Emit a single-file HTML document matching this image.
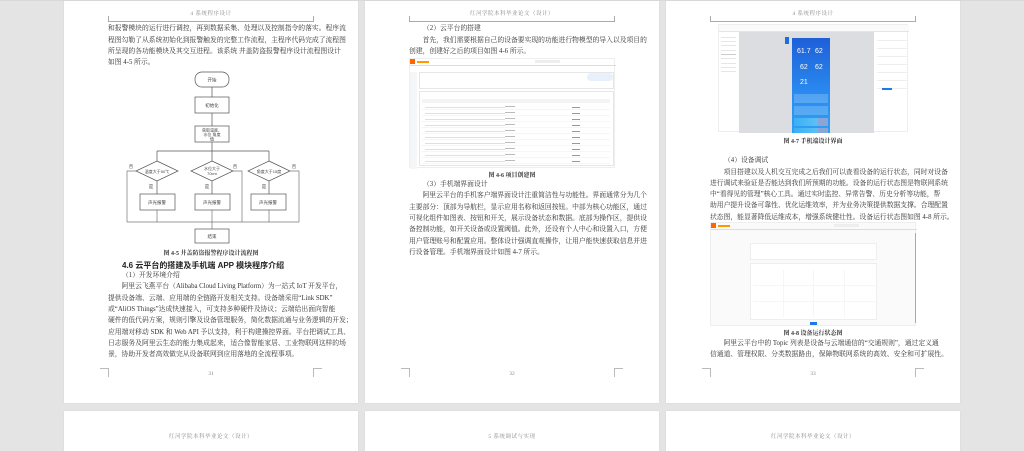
<!DOCTYPE html>
<html><head><meta charset="utf-8"><style>
*{margin:0;padding:0;box-sizing:border-box}
body{width:1024px;height:437px;overflow:hidden;background:#e4e4e4;position:relative;font-family:"Liberation Serif","Noto Serif CJK SC",serif;color:#333}
.pg{position:absolute;background:#fff;width:294px;box-shadow:0 0 1px #ccc}
.t{position:absolute;font-size:6.8px;line-height:9px;white-space:nowrap;text-align:justify;text-align-last:justify;width:206px}
.n{text-align-last:left}
.h{position:absolute;font-size:5.5px;color:#888;width:206px;text-align:center;letter-spacing:.5px}
.hl{position:absolute;height:6px;width:206px;border:0.6px solid #aaa;border-bottom:none;}
.cap{position:absolute;font-size:6px;font-weight:bold;width:206px;text-align:center;color:#333}
.pn{position:absolute;font-size:5.5px;color:#888;width:206px;text-align:center}
.cm{position:absolute;width:9px;height:9px;border-color:#bbb;border-style:solid;border-width:0}
</style></head><body>
<div class="pg" style="left:64px;top:0;height:403px"></div>
<div class="pg" style="left:365px;top:0;height:403px"></div>
<div class="pg" style="left:666px;top:0;height:403px"></div>
<div class="pg" style="left:64px;top:411px;height:40px"></div>
<div class="pg" style="left:365px;top:411px;height:40px"></div>
<div class="pg" style="left:666px;top:411px;height:40px"></div>
<div style="position:absolute;left:0;top:0;width:1024px;height:1px;background:#d8d8d8"></div>

<div class="h" style="left:108px;top:9px">4 系统程序设计</div>
<div class="h" style="left:409px;top:9px">红河学院本科毕业论文（设计）</div>
<div class="h" style="left:710px;top:9px">4 系统程序设计</div>
<div class="hl" style="left:108px;top:16px;transform:scaleY(-1)"></div>
<div class="hl" style="left:409px;top:16px;transform:scaleY(-1)"></div>
<div class="hl" style="left:710px;top:16px;transform:scaleY(-1)"></div>
<div class="h" style="left:108px;top:432px">红河学院本科毕业论文（设计）</div>
<div class="h" style="left:409px;top:432px">5 系统调试与实现</div>
<div class="h" style="left:710px;top:432px">红河学院本科毕业论文（设计）</div>

<!-- page 1 -->
<div class="t" style="left:108px;top:24px">和报警模块的运行进行调控，再到数据采集、处理以及控制指令的落实。程序流</div>
<div class="t" style="left:108px;top:35.5px">程图勾勒了从系统初始化到报警触发的完整工作流程，主程序代码完成了流程图</div>
<div class="t" style="left:108px;top:47px">所呈现的各功能模块及其交互进程。该系统 井盖防盗报警程序设计流程图设计</div>
<div class="t n" style="left:108px;top:58px">如图 4-5 所示。</div>

<svg style="position:absolute;left:0;top:0" width="1024" height="437" font-family="Liberation Sans,Noto Sans CJK SC,sans-serif" font-size="4.5" fill="none" stroke="#555" stroke-width="0.7">
<rect x="195" y="72" width="34" height="15" rx="7"/>
<rect x="195" y="97" width="34" height="16"/>
<rect x="195" y="126" width="34" height="16"/>
<path d="M212 87V97M212 113V126M212 142V151M157 151H269M157 151V161M212 151V161M269 151V161"/>
<path d="M157 161L178 171L157 181L136 171Z M212 161L233 171L212 181L191 171Z M269 161L290 171L269 181L248 171Z"/>
<path d="M157 181V194M212 181V194M269 181V194"/>
<rect x="140" y="194" width="35" height="16"/>
<rect x="195" y="194" width="35" height="16"/>
<rect x="251" y="194" width="35" height="16"/>
<path d="M157 210V222M212 210V229M269 210V222M136 171H127V222M233 171H242V222M290 171H299V222M127 222H299" stroke="#777"/>
<rect x="195" y="229" width="34" height="14"/>
<g fill="#444" stroke="none" text-anchor="middle">
<text x="212" y="81.5">开始</text><text x="212" y="107">初始化</text>
<text x="212" y="131.5" font-size="4">获取温度、</text><text x="212" y="136" font-size="4">水位 角度</text><text x="212" y="140.5" font-size="4">值</text>
<text x="157" y="173" font-size="4">温度大于50℃</text>
<text x="212" y="170" font-size="4">水位大于</text><text x="212" y="175" font-size="4">70cm</text>
<text x="269" y="173" font-size="4">角度大于15度</text>
<text x="131" y="168">否</text><text x="235" y="168">否</text><text x="294" y="168">否</text>
<text x="151" y="188">是</text><text x="207" y="188">是</text><text x="264" y="188">是</text>
<text x="157" y="204">声光报警</text><text x="212" y="204">声光报警</text><text x="268" y="204">声光报警</text>
<text x="212" y="238">结束</text>
</g>
</svg>

<div class="cap" style="left:108px;top:248px">图 4-5 井盖防盗报警程序设计流程图</div>
<div style="position:absolute;left:122px;top:259.5px;font-size:8px;font-weight:bold;font-family:'Liberation Sans','Noto Sans CJK SC',sans-serif;color:#222;white-space:nowrap">4.6 云平台的搭建及手机端 APP 模块程序介绍</div>
<div class="t n" style="left:122px;top:270.5px">（1）开发环境介绍</div>
<div class="t" style="left:108px;top:282px">　　阿里云飞燕平台（Alibaba Cloud Living Platform）为一站式 IoT 开发平台，</div>
<div class="t" style="left:108px;top:293.5px">提供设备端、云端、应用端的全链路开发相关支持。设备端采用“Link SDK”</div>
<div class="t" style="left:108px;top:305px">或“AliOS Things”达成快速接入，可支持多种硬件及协议；云端给出面向智能</div>
<div class="t" style="left:108px;top:316px">硬件的低代码方案，规则引擎及设备管理服务，简化数据流通与业务逻辑的开发；</div>
<div class="t" style="left:108px;top:327.5px">应用端对移动 SDK 和 Web API 予以支持，利于构建操控界面。平台把调试工具、</div>
<div class="t" style="left:108px;top:339px">日志服务及阿里云生态的能力集成起来，适合像智能家居、工业物联网这样的场</div>
<div class="t n" style="left:108px;top:350px">景，协助开发者高效做完从设备联网到应用落地的全流程事项。</div>
<div class="pn" style="left:108px;top:371px">31</div>

<!-- page 2 -->
<div class="t n" style="left:423px;top:24px">（2）云平台的搭建</div>
<div class="t" style="left:409px;top:35.5px">　　首先，我们需要根据自己的设备要实现的功能进行物模型的导入以及项目的</div>
<div class="t n" style="left:409px;top:47px">创建，创建好之后的项目如图 4-6 所示。</div>
<div style="position:absolute;left:409px;top:58px;width:206px;height:110px;background:#fff;border:0.5px solid #eee">
 <div style="position:absolute;left:0;top:0;width:5px;height:5px;background:#f60"></div>
 <div style="position:absolute;left:7px;top:2px;width:12px;height:2px;background:#f90"></div>
 <div style="position:absolute;left:125px;top:1px;width:25px;height:3px;background:#eee"></div>
 <div style="position:absolute;left:0;top:6px;width:206px;height:0.5px;background:#ddd"></div>
 <div style="position:absolute;left:0;top:13px;width:7px;height:97px;background:#f5f6f8"></div>
 <div style="position:absolute;left:9px;top:13px;width:195px;height:17px;border:0.5px solid #e6e6e6"></div>
 <div style="position:absolute;left:177px;top:14px;width:26px;height:8px;background:#e8f0fb;border-radius:4px"></div>
 <div style="position:absolute;left:9px;top:32px;width:195px;height:75px;border:0.5px solid #e6e6e6">
  <div style="position:absolute;left:2px;top:7px;width:188px;height:4px;background:#f3f4f6"></div>
  <div style="position:absolute;left:2px;top:12px;width:188px;height:61px;background:repeating-linear-gradient(#fff 0 5.5px,#eee 5.5px 6px)"></div>
  <div style="position:absolute;left:152px;top:13px;width:8px;height:60px;background:repeating-linear-gradient(transparent 0 2px,#6aa2e8 2px 3px,transparent 3px 6px)"></div>
  <div style="position:absolute;left:85px;top:13px;width:10px;height:60px;background:repeating-linear-gradient(transparent 0 1px,#bbb 1px 2px,transparent 2px 6px)"></div>
  <div style="position:absolute;left:5px;top:13px;width:80px;height:60px;background:repeating-linear-gradient(transparent 0 2px,#ccc 2px 2.8px,transparent 2.8px 6px);opacity:.6"></div>
 </div>
</div>
<div class="cap" style="left:409px;top:170px">图 4-6 项目创建图</div>
<div class="t n" style="left:423px;top:180px">（3）手机端界面设计</div>
<div class="t" style="left:409px;top:191px">　　阿里云平台的手机客户端界面设计注重简洁性与功能性。界面通常分为几个</div>
<div class="t" style="left:409px;top:202.5px">主要部分：顶部为导航栏，显示应用名称和返回按钮。中部为核心功能区，通过</div>
<div class="t" style="left:409px;top:214px">可视化组件如图表、按钮和开关，展示设备状态和数据。底部为操作区，提供设</div>
<div class="t" style="left:409px;top:225px">备控制功能，如开关设备或设置阈值。此外，还设有个人中心和设置入口，方便</div>
<div class="t" style="left:409px;top:236.5px">用户管理账号和配置应用。整体设计强调直观操作，让用户能快速获取信息并进</div>
<div class="t n" style="left:409px;top:248px">行设备管理。手机端界面设计如图 4-7 所示。</div>
<div class="pn" style="left:409px;top:371px">32</div>

<!-- page 3 -->
<div style="position:absolute;left:718px;top:24px;width:190px;height:108px;background:#fff;border:0.5px solid #eee">
 <div style="position:absolute;left:0;top:0;width:190px;height:7px;background:#fafafa;border-bottom:0.5px solid #e5e5e5"></div>
 <div style="position:absolute;left:20px;top:7px;width:135px;height:101px;background:#dcdde1"></div>
 <div style="position:absolute;left:2px;top:10px;width:15px;height:40px;background:repeating-linear-gradient(#fff 0 2px,#ccc 2px 2.6px,#fff 2.6px 4.3px)"></div>
 <div style="position:absolute;left:158px;top:10px;width:30px;height:60px;background:repeating-linear-gradient(#fff 0 5px,#ddd 5px 5.6px,#fff 5.6px 8px)"></div>
 <div style="position:absolute;left:163px;top:63px;width:10px;height:2px;background:#1e7ae8"></div>
 <div style="position:absolute;left:66px;top:12px;width:4px;height:7px;background:#1a6fe0"></div>
 <div style="position:absolute;left:73px;top:13px;width:38px;height:95px;background:linear-gradient(#1e5fd8,#2a8cf0 60%,#2fa0f0);font-family:'Liberation Sans',sans-serif;color:#fff">
  <div style="position:absolute;left:5px;top:10px;font-size:7px">61.7</div>
  <div style="position:absolute;left:23px;top:10px;font-size:7px">62</div>
  <div style="position:absolute;left:8px;top:26px;font-size:7px">62</div>
  <div style="position:absolute;left:23px;top:26px;font-size:7px">62</div>
  <div style="position:absolute;left:8px;top:41px;font-size:7px">21</div>
  <div style="position:absolute;left:2px;top:56px;width:34px;height:9px;background:rgba(255,255,255,.2)"></div>
  <div style="position:absolute;left:2px;top:68px;width:34px;height:9px;background:rgba(255,255,255,.2)"></div>
  <div style="position:absolute;left:2px;top:80px;width:34px;height:8px;background:linear-gradient(90deg,#3ab0f5,#5dc0f5 70%,#8aa6d8 70%)"></div>
  <div style="position:absolute;left:2px;top:90px;width:34px;height:5px;background:linear-gradient(90deg,#3ab0f5,#5dc0f5 70%,#8aa6d8 70%)"></div>
 </div>
</div>
<div class="cap" style="left:710px;top:136px">图 4-7 手机端设计界面</div>
<div class="t n" style="left:724px;top:156px">（4）设备调试</div>
<div class="t" style="left:710px;top:167.5px">　　项目搭建以及人机交互完成之后我们可以查看设备的运行状态，同时对设备</div>
<div class="t" style="left:710px;top:178.5px">进行调试来验证是否能达到我们所预期的功能。设备的运行状态图是物联网系统</div>
<div class="t" style="left:710px;top:190px">中“看得见的管理”核心工具。通过实时监控、异常告警、历史分析等功能，帮</div>
<div class="t" style="left:710px;top:201px">助用户提升设备可靠性、优化运维效率，并为业务决策提供数据支撑。合理配置</div>
<div class="t" style="left:710px;top:212.5px">状态图，能显著降低运维成本，增强系统健壮性。设备运行状态图如图 4-8 所示。</div>
<div style="position:absolute;left:710px;top:222px;width:206px;height:104px;background:#fafafa;border:0.5px solid #eee">
 <div style="position:absolute;left:0;top:0;width:5px;height:5px;background:#f60"></div>
 <div style="position:absolute;left:7px;top:2px;width:12px;height:2px;background:#f90"></div>
 <div style="position:absolute;left:123px;top:1px;width:25px;height:3px;background:#eee"></div>
 <div style="position:absolute;left:0;top:6px;width:206px;height:0.5px;background:#ddd"></div>
 <div style="position:absolute;left:39px;top:20px;width:127px;height:17px;background:#fff;border:0.5px solid #eee"></div>
 <div style="position:absolute;left:39px;top:40px;width:127px;height:57px;background:#fff;border:0.5px solid #eee">
  <div style="position:absolute;left:2px;top:6px;width:122px;height:47px;background:linear-gradient(90deg,transparent 0 24.5%,#eee 24.5% 25%,transparent 25% 49.5%,#eee 49.5% 50%,transparent 50% 74.5%,#eee 74.5% 75%,transparent 75%),linear-gradient(transparent 0 33%,#eee 33% 34%,transparent 34% 66%,#eee 66% 67%,transparent 67%)"></div>
 </div>
 <div style="position:absolute;left:99px;top:99px;width:7px;height:3px;background:#1e7ae8"></div>
 <div style="position:absolute;left:204px;top:10px;width:1px;height:90px;background:#aaa"></div>
</div>
<div class="cap" style="left:710px;top:328px">图 4-8 设备运行状态图</div>
<div class="t" style="left:710px;top:339px">　　阿里云平台中的 Topic 列表是设备与云端通信的“交通规则”，通过定义通</div>
<div class="t" style="left:710px;top:350px">信通道、管理权限、分类数据路由，保障物联网系统的高效、安全和可扩展性。</div>
<div class="pn" style="left:710px;top:371px">33</div>

<div class="cm" style="left:100px;top:368px;border-top-width:.6px;border-right-width:.6px"></div>
<div class="cm" style="left:313px;top:368px;border-top-width:.6px;border-left-width:.6px"></div>
<div class="cm" style="left:401px;top:368px;border-top-width:.6px;border-right-width:.6px"></div>
<div class="cm" style="left:614px;top:368px;border-top-width:.6px;border-left-width:.6px"></div>
<div class="cm" style="left:702px;top:368px;border-top-width:.6px;border-right-width:.6px"></div>
<div class="cm" style="left:915px;top:368px;border-top-width:.6px;border-left-width:.6px"></div>
</body></html>
